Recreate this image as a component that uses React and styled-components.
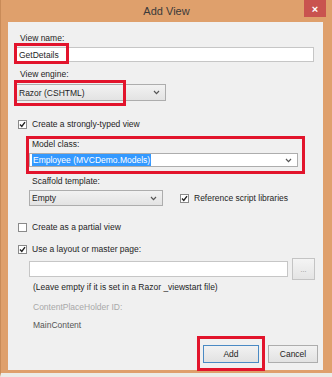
import React from "react";
import styled, { createGlobalStyle } from "styled-components";

const GlobalStyle = createGlobalStyle`
  html, body { margin: 0; padding: 0; background: #ffffff; }
  body { font-family: "Liberation Sans", Arial, sans-serif; }
`;

const Window = styled.div`
  width: 332px;
  height: 377px;
  box-sizing: border-box;
  background: #dfa06c;
  border-left: 1px solid #c98b58;
  border-bottom: 4px solid #ecece8;
  display: flex;
  flex-direction: column;
`;

const TitleBar = styled.div`
  height: 22px;
  flex-shrink: 0;
  display: grid;
  grid-template-columns: 1fr auto 1fr;
  align-items: start;
`;

const Title = styled.div`
  grid-column: 2;
  align-self: center;
  font-family: "Liberation Sans", Arial, sans-serif;
  font-size: 11px;
  color: #3a3a3a;
`;

const CloseButton = styled.div`
  grid-column: 3;
  justify-self: end;
  width: 22px;
  height: 17px;
  margin-right: 6px;
  background: #c9534f;
  color: #ffffff;
  font-size: 11px;
  font-weight: bold;
  display: flex;
  align-items: center;
  justify-content: center;
`;

const Panel = styled.div`
  flex: 1;
  margin: 0 9px 3px 7px;
  background: #f0f0f0;
  display: flex;
  flex-direction: column;
  padding: 0 5px 0 0;
  font-size: 8.5px;
  color: #1e1e1e;
`;

const Label = styled.div`
  height: 10px;
  line-height: 10px;
  margin-top: ${(p) => p.$top || 0}px;
  padding-left: ${(p) => p.$indent || 0}px;
  color: ${(p) => p.$muted ? "#a8a8a8" : p.$soft ? "#555555" : "#1e1e1e"};
  white-space: nowrap;
`;

const Field = styled.div`
  position: relative;
  box-sizing: border-box;
  width: ${(p) => p.$width}px;
  height: ${(p) => p.$height || 15}px;
  margin-top: ${(p) => p.$top || 0}px;
  margin-left: ${(p) => p.$left || 0}px;
  background: #ffffff;
  border: 1px solid #c6c6c6;
  display: flex;
  align-items: center;
  padding-left: 2px;
`;

const Select = styled.div`
  position: relative;
  box-sizing: border-box;
  width: ${(p) => p.$width}px;
  height: ${(p) => p.$height || 16}px;
  margin-top: ${(p) => p.$top || 0}px;
  margin-left: ${(p) => p.$left || 0}px;
  background: ${(p) => p.$editable ? "#ffffff" : "linear-gradient(#f2f2f2, #e3e3e3)"};
  border: 1px solid #adadad;
  display: flex;
  align-items: center;
  justify-content: space-between;
  padding: 0 5px 0 2px;
`;

const Selected = styled.span`
  background: #3399ff;
  color: #ffffff;
  padding: 1px 1px;
`;

const Chevron = styled.svg`
  width: 7px;
  height: 5px;
  flex-shrink: 0;
`;

const Highlight = styled.div`
  position: absolute;
  top: ${(p) => p.$top}px;
  left: ${(p) => p.$left}px;
  width: ${(p) => p.$width}px;
  height: ${(p) => p.$height}px;
  box-sizing: border-box;
  border: 3px solid #e2142c;
  pointer-events: none;
`;

const CheckRow = styled.label`
  display: flex;
  align-items: center;
  gap: 5px;
  height: 10px;
  margin-top: ${(p) => p.$top || 0}px;
  margin-left: ${(p) => p.$left || 0}px;
  white-space: nowrap;
`;

const Box = styled.span`
  width: 9px;
  height: 9px;
  box-sizing: border-box;
  background: #ffffff;
  border: 1px solid #8a8a8a;
  display: flex;
  align-items: center;
  justify-content: center;
`;

const SubSection = styled.div`
  margin-left: 21px;
  display: flex;
  flex-direction: column;
`;

const Group = styled.div`
  position: relative;
  display: flex;
  flex-direction: column;
  margin-top: ${(p) => p.$top || 0}px;
`;

const Row = styled.div`
  display: flex;
  align-items: center;
  gap: ${(p) => p.$gap || 0}px;
  margin-top: ${(p) => p.$top || 0}px;
`;

const SmallButton = styled.div`
  box-sizing: border-box;
  width: 23px;
  height: 22px;
  background: linear-gradient(#f4f4f4, #e4e4e4);
  border: 1px solid #c4c4c4;
  display: flex;
  align-items: center;
  justify-content: center;
  color: #8a8a8a;
  font-size: 7px;
`;

const Footer = styled.div`
  display: flex;
  justify-content: flex-end;
  gap: 9px;
  margin-top: 15px;
`;

const Button = styled.div`
  position: relative;
  box-sizing: border-box;
  width: ${(p) => p.$width}px;
  height: 18px;
  background: linear-gradient(#f2f2f2, #e2e2e2);
  border: 1px solid ${(p) => p.$primary ? "#4a8ac4" : "#adadad"};
  display: flex;
  align-items: center;
  justify-content: center;
`;

function Check({ checked }) {
  return (
    <Box>
      {checked && (
        <svg width="7" height="7" viewBox="0 0 7 7">
          <path d="M1 3.6 L2.8 5.4 L6 1.2" fill="none" stroke="#222" strokeWidth="1.4" />
        </svg>
      )}
    </Box>
  );
}

function Arrow() {
  return (
    <Chevron viewBox="0 0 7 5">
      <path d="M1 1 L3.5 3.6 L6 1" fill="none" stroke="#555" strokeWidth="1.2" />
    </Chevron>
  );
}

export default function App() {
  return (
    <>
      <GlobalStyle />
      <Window>
        <TitleBar>
          <Title>Add View</Title>
          <CloseButton>×</CloseButton>
        </TitleBar>
        <Panel>
          <Label $top={11} $indent={12}>View name:</Label>
          <Field $width={298} $top={4} $left={8}>
            GetDetails
            <Highlight $top={-5} $left={-3} $width={55} $height={21} />
          </Field>

          <Label $top={7} $indent={12}>View engine:</Label>
          <Select $width={150} $height={17} $top={5} $left={8}>
            Razor (CSHTML)
            <Arrow />
            <Highlight $top={-5} $left={-3} $width={112} $height={26} />
          </Select>

          <CheckRow $top={18} $left={10}>
            <Check checked />
            Create a strongly-typed view
          </CheckRow>

          <SubSection>
            <Group $top={10}>
              <Label $indent={3}>Model class:</Label>
              <Select $editable $width={269} $height={14} $top={4}>
                <Selected>Employee (MVCDemo.Models)</Selected>
                <Arrow />
              </Select>
              <Highlight $top={-3} $left={-3} $width={279} $height={38} />
            </Group>

            <Label $top={9} $indent={3}>Scaffold template:</Label>
            <Row $top={4} $gap={17}>
              <Select $width={134}>
                Empty
                <Arrow />
              </Select>
              <CheckRow>
                <Check checked />
                Reference script libraries
              </CheckRow>
            </Row>
          </SubSection>

          <CheckRow $top={16} $left={10}>
            <Check />
            Create as a partial view
          </CheckRow>
          <CheckRow $top={12} $left={10}>
            <Check checked />
            Use a layout or master page:
          </CheckRow>

          <SubSection>
            <Row $top={4} $gap={4}>
              <Field $width={259} $height={16} />
              <SmallButton>...</SmallButton>
            </Row>
            <Label $top={2} $indent={4}>(Leave empty if it is set in a Razor _viewstart file)</Label>
            <Label $top={10} $indent={4} $muted>ContentPlaceHolder ID:</Label>
            <Label $top={8} $indent={4} $soft>MainContent</Label>
          </SubSection>

          <Footer>
            <Button $primary $width={56}>
              Add
              <Highlight $top={-10} $left={-7} $width={68} $height={35} />
            </Button>
            <Button $width={50}>Cancel</Button>
          </Footer>
        </Panel>
      </Window>
    </>
  );
}
